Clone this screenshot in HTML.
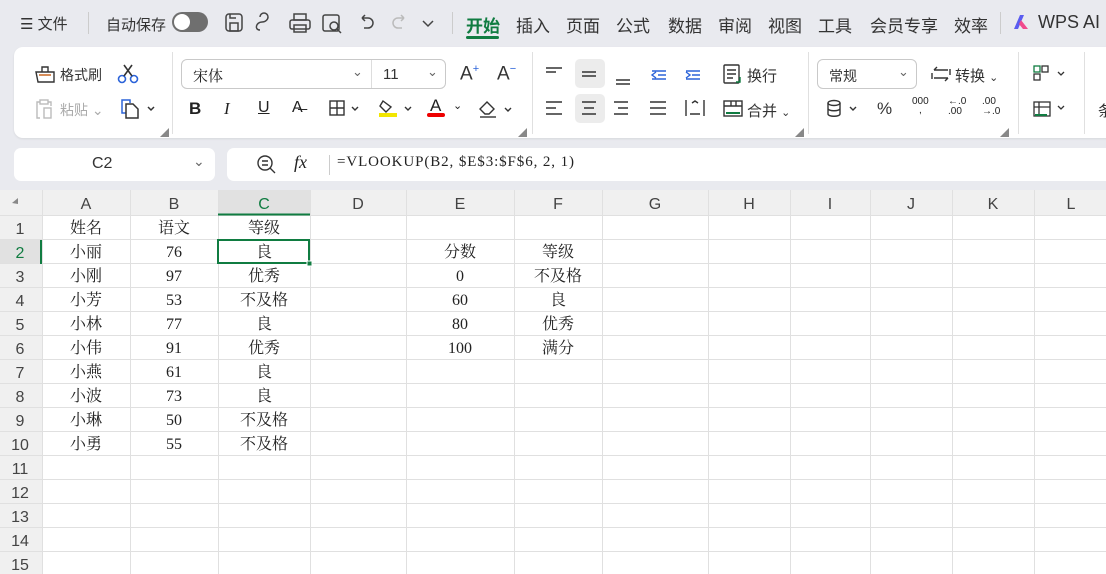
<!DOCTYPE html>
<html><head><meta charset="utf-8"><style>
*{margin:0;padding:0;box-sizing:border-box}
body{width:1106px;height:574px;overflow:hidden;background:#e9eaef;font-family:"Liberation Sans","Noto Sans CJK SC",sans-serif;color:#222;position:relative}
.a{position:absolute;white-space:nowrap}
.t{font-size:16px;color:#333}
.card{position:absolute;left:14px;top:47px;width:1120px;height:91px;background:#fff;border-radius:9px;box-shadow:0 1px 2px rgba(0,0,0,.08)}
.vs{position:absolute;width:1px;background:#e0e0e0}
.box{position:absolute;border:1px solid #c9c9c9;border-radius:6px;background:#fff}
</style></head><body>
<div class="a t" style="left:20px;top:13px;font-size:15px">☰ 文件</div>
<div class="vs" style="left:88px;top:12px;height:22px;background:#ccc"></div>
<div class="a t" style="left:106px;top:14px;font-size:15px">自动保存</div>
<div class="a" style="left:172px;top:12px;width:36px;height:20px;border-radius:10px;background:#6f6f6f"><div style="position:absolute;left:2px;top:2px;width:16px;height:16px;border-radius:50%;background:#fff"></div></div>
<svg class="a" style="left:222px;top:10px" width="230" height="26" fill="none" stroke="#444" stroke-width="1.5">
<rect x="4" y="4" width="16" height="17" rx="3"/><rect x="8" y="13" width="8" height="8"/><path d="M8 4v4h6"/>
<path d="M38 20c-6 0 -4-8 2-8 4 0 6-3 6-5a4 4 0 0 0-8 0"/>
<rect x="68" y="10" width="20" height="9" rx="2"/><rect x="72" y="4" width="12" height="6"/><rect x="72" y="15" width="12" height="7"/>
<rect x="101" y="5" width="16" height="16" rx="2"/><circle cx="112" cy="16" r="4"/><path d="M115 19l4 4"/>
<path d="M140 8h6a5 5 0 0 1 0 10h-4M140 8l3-3M140 8l3 3"/>
<path d="M182 8h-6a5 5 0 0 0 0 10h4M182 8l-3-3M182 8l-3 3" stroke="#bbb"/>
<path d="M201 11l5 5 5-5"/>
</svg>
<div class="vs" style="left:452px;top:12px;height:22px;background:#ccc"></div>
<div class="a" style="left:466px;top:12px;font-size:17px;font-weight:bold;color:#107c41">开始</div>
<div class="a" style="left:466px;top:36px;width:33px;height:3px;background:#107c41;border-radius:2px"></div>
<div class="a t" style="left:516px;top:12px;font-size:17px">插入</div>
<div class="a t" style="left:566px;top:12px;font-size:17px">页面</div>
<div class="a t" style="left:616px;top:12px;font-size:17px">公式</div>
<div class="a t" style="left:668px;top:12px;font-size:17px">数据</div>
<div class="a t" style="left:718px;top:12px;font-size:17px">审阅</div>
<div class="a t" style="left:768px;top:12px;font-size:17px">视图</div>
<div class="a t" style="left:818px;top:12px;font-size:17px">工具</div>
<div class="a t" style="left:870px;top:12px;font-size:17px">会员专享</div>
<div class="a t" style="left:954px;top:12px;font-size:17px">效率</div>
<div class="vs" style="left:1000px;top:12px;height:22px;background:#ccc"></div>
<svg class="a" style="left:1012px;top:14px" width="20" height="16"><path d="M2 15L8 1h4l-6 14z" fill="#5a5cf0"/><path d="M9 6l7 9h-5l-4-5z" fill="#f04a8c"/></svg>
<div class="a t" style="left:1038px;top:12px;font-size:18px">WPS AI</div>

<div class="card"></div>
<div class="vs" style="left:172px;top:52px;height:82px"></div>
<div class="vs" style="left:532px;top:52px;height:82px"></div>
<div class="vs" style="left:808px;top:52px;height:82px"></div>
<div class="vs" style="left:1018px;top:52px;height:82px"></div>
<div class="vs" style="left:1084px;top:52px;height:82px"></div>
<svg class="a" style="left:34px;top:64px" width="22" height="20" fill="none" stroke="#333" stroke-width="1.4"><path d="M2 8h18v10H4z"/><path d="M8 8V3h6v5"/><path d="M5 11h12" stroke="#c55a11"/></svg>
<div class="a t" style="left:60px;top:65px;font-size:14px">格式刷</div>
<svg class="a" style="left:117px;top:63px" width="22" height="22" fill="none" stroke="#2b63d9" stroke-width="1.6"><circle cx="5" cy="16" r="3.5"/><circle cx="17" cy="16" r="3.5"/><path d="M7 13L15 2M15 13L7 2" stroke="#333"/></svg>
<svg class="a" style="left:34px;top:98px" width="22" height="22" fill="none" stroke="#bbb" stroke-width="1.4"><path d="M6 4H3v16h3M14 4h3v4"/><rect x="6" y="2" width="8" height="4"/><rect x="10" y="10" width="7" height="10"/></svg>
<div class="a" style="left:60px;top:100px;font-size:14px;color:#aaa">粘贴 ⌄</div>
<svg class="a" style="left:120px;top:98px" width="36" height="22" fill="none" stroke-width="1.5"><path d="M6 15H2V2h8v3" stroke="#2b63d9"/><path d="M6 6h7l5 5v9H6z" stroke="#333"/><path d="M28 9l3 3 3-3" stroke="#333"/></svg>
<div class="a" style="left:160px;top:126px;font-size:9px;color:#888">◢</div>
<div class="box" style="left:181px;top:59px;width:265px;height:30px"></div>
<div class="vs" style="left:371px;top:60px;height:28px;background:#ddd"></div>
<div class="a" style="left:193px;top:65px;font-size:15px;font-family:'Liberation Serif','Noto Serif CJK SC',serif">宋体</div>
<div class="a" style="left:352px;top:64px;font-size:13px;color:#666">⌄</div>
<div class="a t" style="left:383px;top:66px;font-size:15px">11</div>
<div class="a" style="left:427px;top:64px;font-size:13px;color:#666">⌄</div>
<div class="a t" style="left:460px;top:63px;font-size:19px">A<sup style="font-size:11px;color:#2b63d9">+</sup></div>
<div class="a t" style="left:497px;top:63px;font-size:19px">A<sup style="font-size:11px;color:#2b63d9">−</sup></div>
<div class="a" style="left:189px;top:99px;font-size:17px;font-weight:bold">B</div>
<div class="a" style="left:224px;top:99px;font-size:17px;font-style:italic;font-family:'Liberation Serif',serif">I</div>
<div class="a" style="left:258px;top:99px;font-size:16px;text-decoration:underline">U</div>
<div class="a" style="left:292px;top:99px;font-size:16px">A̶</div>
<svg class="a" style="left:328px;top:99px" width="36" height="18" fill="none" stroke="#333" stroke-width="1.4"><rect x="2" y="2" width="14" height="14"/><path d="M9 2v14M2 9h14M24 8l3 3 3-3"/></svg>
<svg class="a" style="left:377px;top:97px" width="38" height="22" fill="none" stroke="#333" stroke-width="1.4"><path d="M6 4l8 6-5 5-6-6z"/><path d="M2 18h18" stroke="#f2e600" stroke-width="4"/><path d="M28 10l3 3 3-3"/></svg>
<div class="a" style="left:430px;top:96px;font-size:17px">A</div>
<div class="a" style="left:427px;top:113px;width:18px;height:4px;background:#e00;border-radius:2px"></div>
<div class="a" style="left:453px;top:99px;font-size:11px">⌄</div>
<svg class="a" style="left:477px;top:98px" width="38" height="22" fill="none" stroke="#333" stroke-width="1.4"><path d="M3 11l7-7 7 7-5 5H8z"/><path d="M3 19h16"/><path d="M28 10l3 3 3-3"/></svg>
<div class="a" style="left:518px;top:126px;font-size:9px;color:#888">◢</div>
<div class="a" style="left:575px;top:59px;width:30px;height:29px;background:#ececec;border-radius:5px"></div>
<div class="a" style="left:575px;top:94px;width:30px;height:29px;background:#ececec;border-radius:5px"></div>
<svg class="a" style="left:544px;top:62px" width="170" height="60" fill="none" stroke="#333" stroke-width="1.4">
<path d="M2 6h16M2 10h10"/><path d="M38 10h14M38 14h14"/><path d="M72 18h14M72 22h14"/>
<path d="M108 9h14M114 13h8M108 17h14M112 10l-4 3 4 3" stroke="#2b63d9"/><path d="M142 9h14M148 13h8M142 17h14M142 10l4 3-4 3" stroke="#2b63d9"/>
<path d="M2 40h16M2 46h10M2 52h16"/><path d="M38 40h14M40 46h10M38 52h14"/><path d="M70 40h14M74 46h10M70 52h14"/><path d="M106 40h16M106 46h16M106 52h16"/>
<path d="M142 38v16M160 38v16M146 52h10M148 41l3-2 3 2"/>
</svg>
<svg class="a" style="left:722px;top:63px" width="22" height="22" fill="none" stroke="#333" stroke-width="1.4"><rect x="2" y="2" width="15" height="18" rx="1"/><path d="M5 7h9M5 11h9M5 15h6"/><path d="M18 14v5h-4" stroke="#107c41"/></svg>
<div class="a t" style="left:747px;top:65px;font-size:15px">换行</div>
<svg class="a" style="left:722px;top:99px" width="22" height="20" fill="none" stroke="#333" stroke-width="1.4"><rect x="2" y="2" width="18" height="15"/><path d="M2 7h18M9 2v5M14 2v5"/><path d="M4 14h14" stroke="#107c41" stroke-width="2"/></svg>
<div class="a t" style="left:747px;top:100px;font-size:15px">合并 <span style="font-size:11px">⌄</span></div>
<div class="a" style="left:795px;top:126px;font-size:9px;color:#888">◢</div>
<div class="box" style="left:817px;top:59px;width:100px;height:30px"></div>
<div class="a t" style="left:829px;top:66px;font-size:14px">常规</div>
<div class="a" style="left:898px;top:64px;font-size:13px;color:#666">⌄</div>
<svg class="a" style="left:930px;top:64px" width="22" height="20" fill="none" stroke="#333" stroke-width="1.4"><path d="M4 6h14M4 6l3-3M18 14H4M18 14l-3 3M2 9v6M20 5v6"/></svg>
<div class="a t" style="left:955px;top:65px;font-size:15px">转换 <span style="font-size:11px">⌄</span></div>
<svg class="a" style="left:826px;top:99px" width="34" height="20" fill="none" stroke="#333" stroke-width="1.4"><ellipse cx="8" cy="4" rx="6" ry="2.5"/><path d="M2 4v11c0 3 12 3 12 0V4M2 9.5c0 3 12 3 12 0"/><path d="M24 8l3 3 3-3"/></svg>
<div class="a t" style="left:877px;top:99px;font-size:17px">%</div>
<div class="a" style="left:912px;top:97px;font-size:10px;line-height:9px;text-align:center">000<br>,</div>
<div class="a" style="left:948px;top:97px;font-size:10px;line-height:10px">←.0<br>.00</div>
<div class="a" style="left:982px;top:97px;font-size:10px;line-height:10px">.00<br>→.0</div>
<div class="a" style="left:1000px;top:126px;font-size:9px;color:#888">◢</div>
<svg class="a" style="left:1032px;top:64px" width="36" height="56" fill="none" stroke="#333" stroke-width="1.3"><rect x="2" y="2" width="6" height="6" stroke="#107c41"/><rect x="10" y="2" width="6" height="6"/><rect x="2" y="10" width="6" height="6"/><path d="M26 8l3 3 3-3"/><rect x="2" y="38" width="16" height="14"/><path d="M2 43h16M7 38v14"/><path d="M3 51h12" stroke="#107c41" stroke-width="2"/><path d="M26 42l3 3 3-3"/></svg>
<div class="a t" style="left:1098px;top:100px;font-size:15px">条</div>

<div class="a" style="left:14px;top:148px;width:201px;height:33px;background:#fff;border-radius:7px"></div>
<div class="a t" style="left:92px;top:155px;font-size:16px">C2</div>
<div class="a" style="left:193px;top:153px;font-size:14px;color:#666">⌄</div>
<div class="a" style="left:227px;top:148px;width:900px;height:33px;background:#fff;border-radius:7px"></div>
<svg class="a" style="left:256px;top:154px" width="22" height="22" fill="none" stroke="#333" stroke-width="1.4"><circle cx="9" cy="9" r="7"/><path d="M14 14l5 5M6 7h6M6 11h6"/></svg>
<div class="a" style="left:294px;top:152px;font-size:18px;font-style:italic;font-family:'Liberation Serif',serif">fx</div>
<div class="vs" style="left:329px;top:155px;height:20px;background:#ccc"></div>
<div class="a" style="left:337px;top:154px;font-size:15px;font-family:'Liberation Serif','Noto Serif CJK SC',serif;letter-spacing:0.9px">=VLOOKUP(B2, $E$3:$F$6, 2, 1)</div>

<svg class="a" style="left:0;top:190px" width="1106" height="384">
<rect width="1106" height="384" fill="#fff"/>
<rect width="1106" height="26" fill="#f0f0f0"/>
<rect width="42" height="384" fill="#f0f0f0"/>
<rect x="218" width="92" height="26" fill="#e1e1e1"/>
<rect x="0" y="50" width="42" height="24" fill="#e1e1e1"/>
<g stroke="#e0e0e0" stroke-width="1">
<path d="M42.5 0v384M130.5 0v384M218.5 0v384M310.5 0v384M406.5 0v384M514.5 0v384M602.5 0v384M708.5 0v384M790.5 0v384M870.5 0v384M952.5 0v384M1034.5 0v384"/>
<path d="M0 25.5h1106M0 49.5h1106M0 73.5h1106M0 97.5h1106M0 121.5h1106M0 145.5h1106M0 169.5h1106M0 193.5h1106M0 217.5h1106M0 241.5h1106M0 265.5h1106M0 289.5h1106M0 313.5h1106M0 337.5h1106M0 361.5h1106"/>
</g>
<path d="M218 24.5h92" stroke="#107c41" stroke-width="2"/>
<path d="M41 50v24" stroke="#107c41" stroke-width="2"/>
<rect x="218" y="50" width="91" height="23" fill="none" stroke="#107c41" stroke-width="2"/>
<rect x="307" y="71" width="5" height="5" fill="#107c41" stroke="#fff" stroke-width="1"/>
<path d="M12 13l6-5v6z" fill="#888"/>
<g font-family="Liberation Sans, sans-serif" font-size="16" fill="#444" text-anchor="middle">
<text x="86" y="19">A</text><text x="174" y="19">B</text><text x="264" y="19" fill="#107c41">C</text><text x="358" y="19">D</text><text x="460" y="19">E</text><text x="558" y="19">F</text><text x="655" y="19">G</text><text x="749" y="19">H</text><text x="830" y="19">I</text><text x="911" y="19">J</text><text x="993" y="19">K</text><text x="1071" y="19">L</text>
<text x="20" y="44">1</text><text x="20" y="68" fill="#107c41">2</text><text x="20" y="92">3</text><text x="20" y="116">4</text><text x="20" y="140">5</text><text x="20" y="164">6</text><text x="20" y="188">7</text><text x="20" y="212">8</text><text x="20" y="236">9</text><text x="20" y="260">10</text><text x="20" y="284">11</text><text x="20" y="308">12</text><text x="20" y="332">13</text><text x="20" y="356">14</text><text x="20" y="380">15</text>
</g>
<g font-family="Liberation Serif, Noto Serif CJK SC, serif" font-size="16" fill="#222" text-anchor="middle">
<text x="86" y="43">姓名</text><text x="174" y="43">语文</text><text x="264" y="43">等级</text>
<text x="86" y="67">小丽</text><text x="174" y="67">76</text><text x="264" y="67">良</text><text x="460" y="67">分数</text><text x="558" y="67">等级</text>
<text x="86" y="91">小刚</text><text x="174" y="91">97</text><text x="264" y="91">优秀</text><text x="460" y="91">0</text><text x="558" y="91">不及格</text>
<text x="86" y="115">小芳</text><text x="174" y="115">53</text><text x="264" y="115">不及格</text><text x="460" y="115">60</text><text x="558" y="115">良</text>
<text x="86" y="139">小林</text><text x="174" y="139">77</text><text x="264" y="139">良</text><text x="460" y="139">80</text><text x="558" y="139">优秀</text>
<text x="86" y="163">小伟</text><text x="174" y="163">91</text><text x="264" y="163">优秀</text><text x="460" y="163">100</text><text x="558" y="163">满分</text>
<text x="86" y="187">小燕</text><text x="174" y="187">61</text><text x="264" y="187">良</text>
<text x="86" y="211">小波</text><text x="174" y="211">73</text><text x="264" y="211">良</text>
<text x="86" y="235">小琳</text><text x="174" y="235">50</text><text x="264" y="235">不及格</text>
<text x="86" y="259">小勇</text><text x="174" y="259">55</text><text x="264" y="259">不及格</text>
</g>
</svg>
</body></html>
